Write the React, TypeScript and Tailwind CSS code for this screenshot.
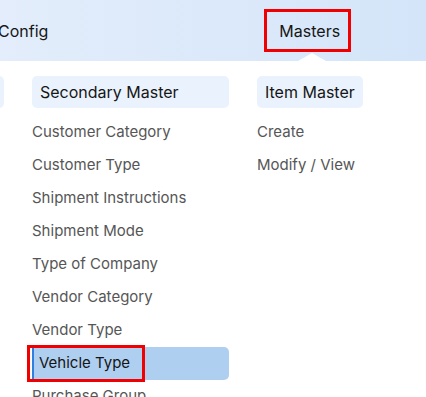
import React from "react";

const SECONDARY = [
  "Customer Category",
  "Customer Type",
  "Shipment Instructions",
  "Shipment Mode",
  "Type of Company",
  "Vendor Category",
  "Vendor Type",
  "Vehicle Type",
  "Purchase Group",
];

const ITEM_MASTER = ["Create", "Modify / View"];

function ColumnHeader({ label, full }: { label: string; full?: boolean }) {
  return (
    <div
      className={`h-[32px] rounded-[5px] bg-[#eaf3fd] px-[8px] flex items-center text-[16px] text-[#161616] ${
        full ? "w-full" : "w-fit"
      }`}
    >
      {label}
    </div>
  );
}

function MenuItem({ label, active }: { label: string; active?: boolean }) {
  if (active) {
    return (
      <div className="relative h-[33px] rounded-r-[5px] bg-[#afcff1] border-l-2 border-[#2f7fe0] pl-[5px] flex items-center text-[15px] text-[#151515]">
        {label}
        <div className="absolute left-[-7px] top-[-2px] h-[37px] w-[118px] border-[3px] border-[#f00000]" />
      </div>
    );
  }
  return (
    <div className="h-[33px] flex items-center text-[15px] text-[#565656] whitespace-nowrap">
      {label}
    </div>
  );
}

export default function App() {
  return (
    <div className="relative w-[426px] h-[397px] overflow-hidden bg-white font-['Inter',sans-serif]">
      <div className="relative h-[61px] bg-gradient-to-r from-[#e3edfb] to-[#d4e5f9] flex items-center">
        <span className="ml-[-2px] text-[16px] text-[#161616]">Config</span>
        <div className="ml-[216px] h-[43px] border-[3px] border-[#f00000] pl-[12px] pr-[8px] flex items-center text-[16px] text-[#161616]">
          Masters
        </div>
        <div className="absolute left-[298px] bottom-0 w-0 h-0 border-l-[14px] border-r-[14px] border-b-[8px] border-l-transparent border-r-transparent border-b-white" />
      </div>

      <div className="flex gap-7 ml-[-193px] pt-[15px]">
        <div className="w-[197px] shrink-0">
          <ColumnHeader label="Primary Master" full />
        </div>
        <div className="w-[197px] shrink-0">
          <ColumnHeader label="Secondary Master" full />
          <div className="mt-[8px] flex flex-col">
            {SECONDARY.map((s) => (
              <MenuItem key={s} label={s} active={s === "Vehicle Type"} />
            ))}
          </div>
        </div>
        <div className="w-[160px] shrink-0">
          <ColumnHeader label="Item Master" />
          <div className="mt-[8px] flex flex-col">
            {ITEM_MASTER.map((s) => (
              <MenuItem key={s} label={s} />
            ))}
          </div>
        </div>
      </div>
    </div>
  );
}
